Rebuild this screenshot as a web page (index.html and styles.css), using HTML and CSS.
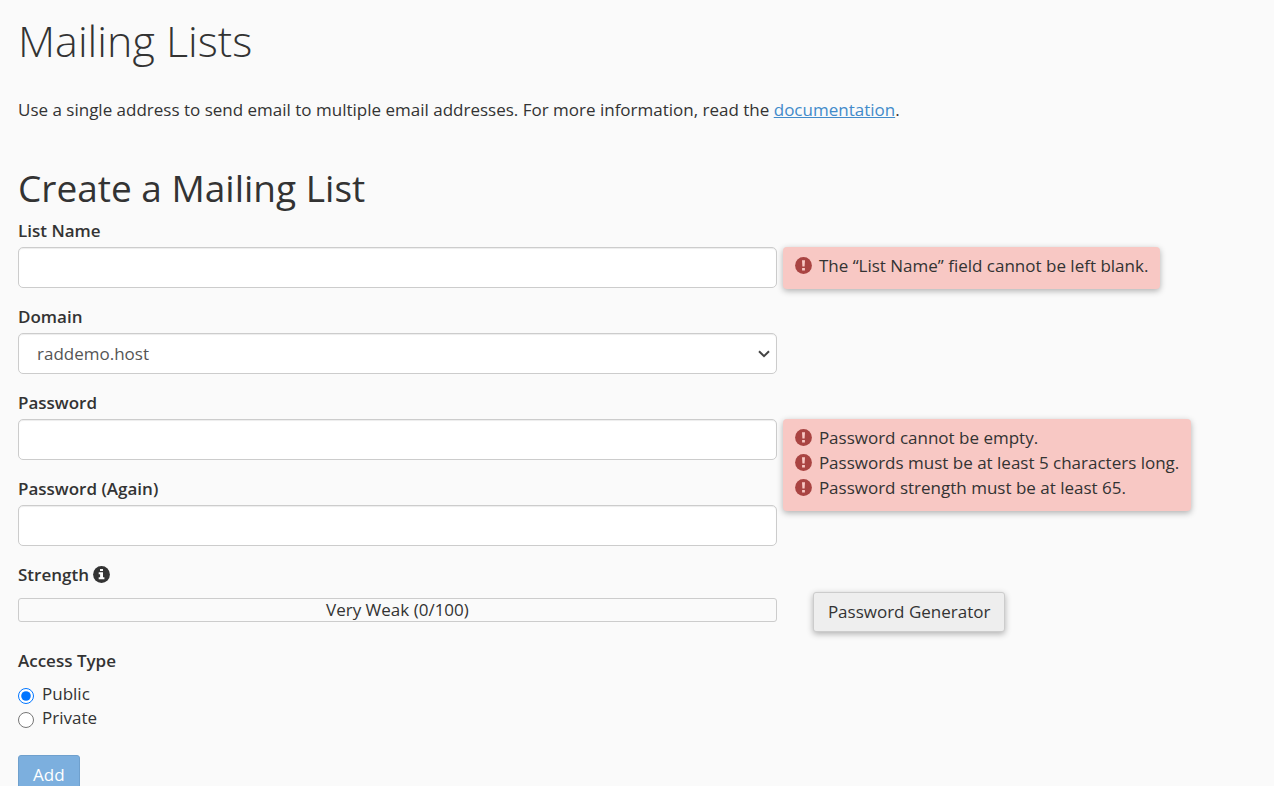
FILE: index.html
```html
<!DOCTYPE html>
<html lang="en">
<head>
<meta charset="utf-8">
<title>Mailing Lists</title>
<link rel="stylesheet" href="styles.css">
</head>
<body>
<svg class="sprite" aria-hidden="true">
  <symbol id="icon-alert" viewBox="0 0 17 17">
    <circle cx="8.5" cy="8.5" r="8.4" fill="currentColor"/>
    <path class="cutout" d="M7 3.2h3l-.4 6.3H7.4zM7.1 10.9h2.8v2.6H7.1z"/>
  </symbol>
  <symbol id="icon-info" viewBox="0 0 17 17">
    <circle cx="8.5" cy="8.5" r="8.4" fill="currentColor"/>
    <path class="cutout" d="M7 2.9h3v2.2H7zM5.7 6.3H10v5h1.4v2H5.7v-2h1.4V8.3H5.7z"/>
  </symbol>
</svg>
<main class="page">
  <h1 class="page-title">Mailing Lists</h1>
  <p class="intro">Use a single address to send email to multiple email addresses. For more information, read the <a class="link" href="#documentation">documentation</a>.</p>
  <h2 class="section-title">Create a Mailing List</h2>
  <form class="form">
    <div class="field">
      <label class="label" for="list-name">List Name</label>
      <div class="row">
        <input class="control" id="list-name" type="text" aria-describedby="list-name-errors">
        <div class="side"><ul class="errors" id="list-name-errors">
          <li class="error"><svg class="icon"><use href="#icon-alert"/></svg>The “List Name” field cannot be left blank.</li>
        </ul></div>
      </div>
    </div>
    <div class="field">
      <label class="label" for="domain">Domain</label>
      <div class="row">
        <div class="select-wrap">
          <select class="control select" id="domain"><option>raddemo.host</option></select>
          <svg class="chevron" viewBox="0 0 12 8" aria-hidden="true"><path d="M1 1.2l5 5 5-5"/></svg>
        </div>
      </div>
    </div>
    <div class="field">
      <label class="label" for="password">Password</label>
      <div class="row">
        <input class="control" id="password" type="password" aria-describedby="password-errors">
        <div class="side"><ul class="errors" id="password-errors">
          <li class="error"><svg class="icon"><use href="#icon-alert"/></svg>Password cannot be empty.</li>
          <li class="error"><svg class="icon"><use href="#icon-alert"/></svg>Passwords must be at least 5 characters long.</li>
          <li class="error"><svg class="icon"><use href="#icon-alert"/></svg>Password strength must be at least 65.</li>
        </ul></div>
      </div>
    </div>
    <div class="field">
      <label class="label" for="password-again">Password (Again)</label>
      <div class="row"><input class="control" id="password-again" type="password"></div>
    </div>
    <div class="field">
      <div class="label label-strength">Strength <svg class="icon"><use href="#icon-info"/></svg></div>
      <div class="row">
        <div class="meter">Very Weak (0/100)</div>
        <div class="generator"><button class="button" type="button">Password Generator</button></div>
      </div>
    </div>
    <fieldset class="access">
      <legend class="label label-access">Access Type</legend>
      <label class="choice"><input class="radio" type="radio" name="access" checked>Public</label>
      <label class="choice"><input class="radio" type="radio" name="access">Private</label>
    </fieldset>
    <button class="button button-primary" type="submit" disabled>Add</button>
  </form>
</main>
</body>
</html>
```

FILE: styles.css
```css
* { box-sizing: border-box; }

body {
  margin: 0;
  background: #fafafa;
  color: #333;
  font: 17px/24px "Open Sans", "Noto Sans", sans-serif;
}

.sprite { display: none; }
.cutout { fill: #fafafa; }

.page { padding: 17px 18px 24px; }

.page-title {
  margin: 0 0 33px;
  font-size: 43px;
  line-height: 48px;
  font-weight: 300;
}

.intro { margin: 0 0 46px; }
.link { color: #428bca; }

.section-title {
  margin: 0 0 11px;
  font-size: 37px;
  line-height: 40px;
  font-weight: 400;
}

.field { margin-bottom: 17px; }

.label {
  display: block;
  width: fit-content;
  margin-bottom: 4px;
  padding: 0;
  font-weight: 600;
}

.label-strength {
  display: flex;
  align-items: center;
  gap: 4px;
  margin-bottom: 5px;
}

.label-strength .icon { margin-bottom: 2px; }

.label-access { margin-bottom: 9px; }

.row {
  display: grid;
  grid-template-columns: 613fr 387fr;
  align-items: start;
}

.control {
  display: block;
  width: 100%;
  height: 41px;
  padding: 6px 18px;
  border: 1px solid #ccc;
  border-radius: 5px;
  background: #fff;
  box-shadow: inset 0 1px 1px rgba(0, 0, 0, .075);
  color: #555;
  font: inherit;
}

.select-wrap { position: relative; }
.select { appearance: none; }

.chevron {
  position: absolute;
  top: 17px;
  right: 7px;
  width: 12px;
  height: 8px;
  fill: none;
  stroke: #444;
  stroke-width: 2;
  pointer-events: none;
}

/* Side messages overlay the following rows instead of pushing them down. */
.side {
  position: relative;
  height: 41px;
}

.errors {
  position: absolute;
  top: 0;
  left: 6px;
  margin: 0;
  padding: 6px 12px 11px;
  border-radius: 4px;
  background: #f8c8c4;
  box-shadow: 0 2px 6px rgba(0, 0, 0, .3);
  list-style: none;
  white-space: nowrap;
}

.error {
  display: flex;
  align-items: center;
  gap: 7px;
  line-height: 25px;
}

.icon {
  flex: none;
  width: 17px;
  height: 17px;
}

.error .icon { color: #a94442; }
.error .icon { --cutout: #f8c8c4; }

.meter {
  height: 24px;
  margin-top: 6px;
  border: 1px solid #ccc;
  border-radius: 3px;
  line-height: 22px;
  text-align: center;
}

.generator { padding-left: 36px; }

.button {
  display: block;
  height: 40px;
  padding: 0 14px;
  border: 1px solid #ccc;
  border-radius: 3px;
  background: #eee;
  box-shadow: 0 2px 6px rgba(0, 0, 0, .3);
  color: #333;
  font: inherit;
}

.cutout { fill: var(--cutout, #fafafa); }

.access {
  min-width: 0;
  margin: 0 0 25px;
  padding: 0;
  border: 0;
}

.choice {
  display: flex;
  align-items: center;
  gap: 8px;
  width: fit-content;
}

.radio {
  width: 16px;
  height: 16px;
  margin: 4px 0 0;
}

.button-primary {
  border-color: #6fa0cd;
  background: #7cafde;
  box-shadow: none;
  color: #fff;
}
```
